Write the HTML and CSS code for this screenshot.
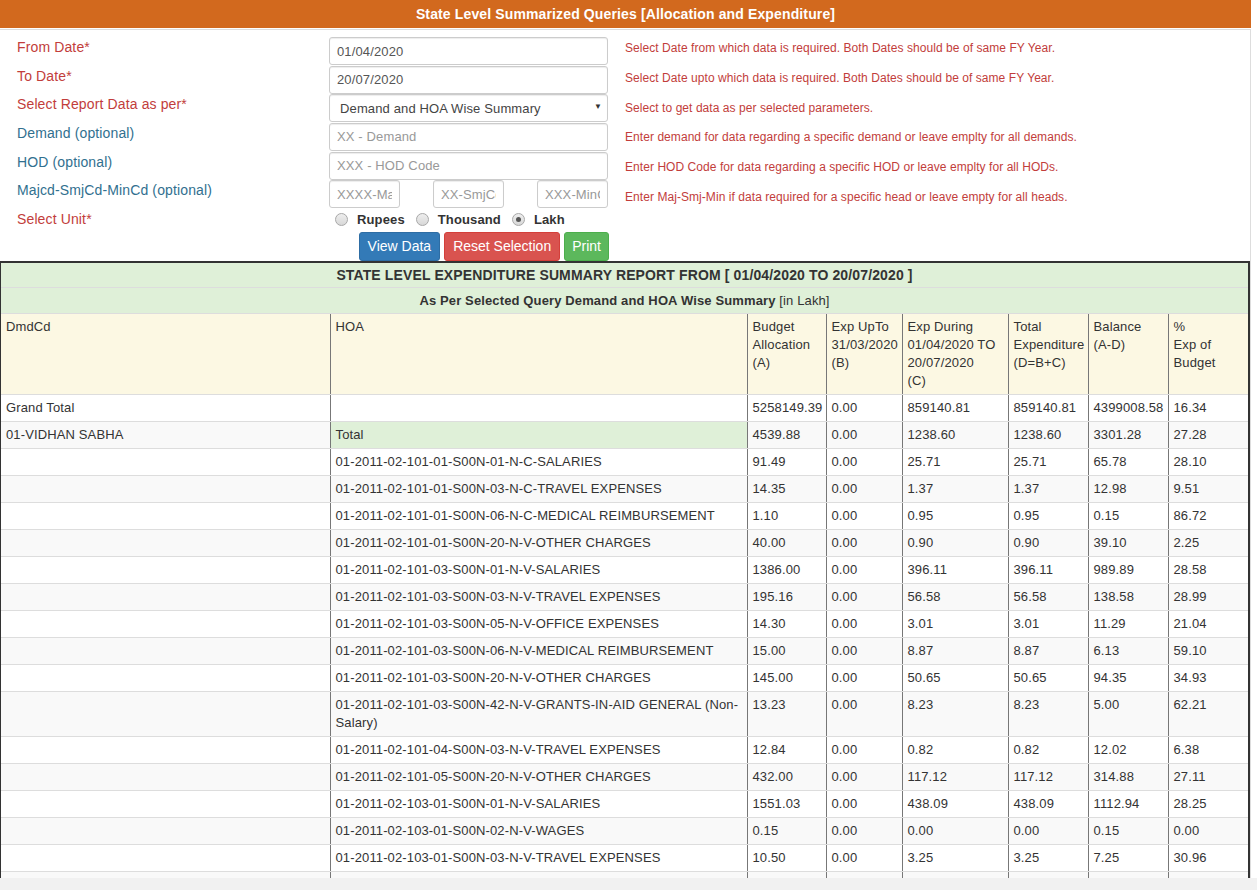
FILE: index.html
```html
<!DOCTYPE html>
<html lang="en">
<head>
<meta charset="utf-8">
<title>State Level Summarized Queries</title>
<link rel="stylesheet" href="styles.css">
</head>
<body>
<div class="app">
  <header class="topbar">State Level Summarized Queries [Allocation and Expenditure]</header>
  <div class="viewport">
    <section class="panel">
      <form class="query">
        <div class="labels">
          <label class="lbl req">From Date*</label>
          <label class="lbl req">To Date*</label>
          <label class="lbl req">Select Report Data as per*</label>
          <label class="lbl opt">Demand (optional)</label>
          <label class="lbl opt">HOD (optional)</label>
          <label class="lbl opt">Majcd-SmjCd-MinCd (optional)</label>
          <label class="lbl req">Select Unit*</label>
        </div>
        <div class="fields">
          <div class="field"><input class="ctl" type="text" value="01/04/2020"></div>
          <div class="field"><input class="ctl" type="text" value="20/07/2020"></div>
          <div class="field">
            <div class="select-wrap">
              <select class="ctl sel"><option>Demand and HOA Wise Summary</option></select>
            </div>
          </div>
          <div class="field"><input class="ctl" type="text" placeholder="XX - Demand"></div>
          <div class="field"><input class="ctl" type="text" placeholder="XXX - HOD Code"></div>
          <div class="field triple">
            <input class="ctl small" type="text" placeholder="XXXX-MajCd">
            <input class="ctl small" type="text" placeholder="XX-SmjCd">
            <input class="ctl small" type="text" placeholder="XXX-MinCd">
          </div>
          <div class="radios">
            <label class="radio"><span class="dot"></span>Rupees</label>
            <label class="radio"><span class="dot"></span>Thousand</label>
            <label class="radio"><span class="dot on"></span>Lakh</label>
          </div>
          <div class="buttons">
            <button type="button" class="btn blue">View Data</button>
            <button type="button" class="btn red">Reset Selection</button>
            <button type="button" class="btn green">Print</button>
          </div>
        </div>
        <div class="helps">
          <p>Select Date from which data is required. Both Dates should be of same FY Year.</p>
          <p>Select Date upto which data is required. Both Dates should be of same FY Year.</p>
          <p>Select to get data as per selected parameters.</p>
          <p>Enter demand for data regarding a specific demand or leave emplty for all demands.</p>
          <p>Enter HOD Code for data regarding a specific HOD or leave emplty for all HODs.</p>
          <p>Enter Maj-Smj-Min if data required for a specific head or leave empty for all heads.</p>
        </div>
      </form>

      <table class="report">
        <colgroup>
          <col class="c1"><col class="c2"><col class="c3"><col class="c4"><col class="c5"><col class="c6"><col class="c7"><col class="c8">
        </colgroup>
        <thead>
          <tr class="title"><th colspan="8">STATE LEVEL EXPENDITURE SUMMARY REPORT FROM [ 01/04/2020 TO 20/07/2020 ]</th></tr>
          <tr class="sub"><th colspan="8">As Per Selected Query Demand and HOA Wise Summary <span class="unit">[in Lakh]</span></th></tr>
          <tr class="cols">
            <td>DmdCd</td>
            <td>HOA</td>
            <td>Budget<br>Allocation<br>(A)</td>
            <td>Exp UpTo<br>31/03/2020<br>(B)</td>
            <td>Exp During<br>01/04/2020 TO<br>20/07/2020<br>(C)</td>
            <td>Total<br>Expenditure<br>(D=B+C)</td>
            <td>Balance<br>(A-D)</td>
            <td>%<br>Exp of<br>Budget</td>
          </tr>
        </thead>
        <tbody>
          <tr><td>Grand Total</td><td></td><td>5258149.39</td><td>0.00</td><td>859140.81</td><td>859140.81</td><td>4399008.58</td><td>16.34</td></tr>
          <tr><td>01-VIDHAN SABHA</td><td class="tot">Total</td><td>4539.88</td><td>0.00</td><td>1238.60</td><td>1238.60</td><td>3301.28</td><td>27.28</td></tr>
          <tr><td></td><td>01-2011-02-101-01-S00N-01-N-C-SALARIES</td><td>91.49</td><td>0.00</td><td>25.71</td><td>25.71</td><td>65.78</td><td>28.10</td></tr>
          <tr><td></td><td>01-2011-02-101-01-S00N-03-N-C-TRAVEL EXPENSES</td><td>14.35</td><td>0.00</td><td>1.37</td><td>1.37</td><td>12.98</td><td>9.51</td></tr>
          <tr><td></td><td>01-2011-02-101-01-S00N-06-N-C-MEDICAL REIMBURSEMENT</td><td>1.10</td><td>0.00</td><td>0.95</td><td>0.95</td><td>0.15</td><td>86.72</td></tr>
          <tr><td></td><td>01-2011-02-101-01-S00N-20-N-V-OTHER CHARGES</td><td>40.00</td><td>0.00</td><td>0.90</td><td>0.90</td><td>39.10</td><td>2.25</td></tr>
          <tr><td></td><td>01-2011-02-101-03-S00N-01-N-V-SALARIES</td><td>1386.00</td><td>0.00</td><td>396.11</td><td>396.11</td><td>989.89</td><td>28.58</td></tr>
          <tr><td></td><td>01-2011-02-101-03-S00N-03-N-V-TRAVEL EXPENSES</td><td>195.16</td><td>0.00</td><td>56.58</td><td>56.58</td><td>138.58</td><td>28.99</td></tr>
          <tr><td></td><td>01-2011-02-101-03-S00N-05-N-V-OFFICE EXPENSES</td><td>14.30</td><td>0.00</td><td>3.01</td><td>3.01</td><td>11.29</td><td>21.04</td></tr>
          <tr><td></td><td>01-2011-02-101-03-S00N-06-N-V-MEDICAL REIMBURSEMENT</td><td>15.00</td><td>0.00</td><td>8.87</td><td>8.87</td><td>6.13</td><td>59.10</td></tr>
          <tr><td></td><td>01-2011-02-101-03-S00N-20-N-V-OTHER CHARGES</td><td>145.00</td><td>0.00</td><td>50.65</td><td>50.65</td><td>94.35</td><td>34.93</td></tr>
          <tr><td></td><td>01-2011-02-101-03-S00N-42-N-V-GRANTS-IN-AID GENERAL (Non-Salary)</td><td>13.23</td><td>0.00</td><td>8.23</td><td>8.23</td><td>5.00</td><td>62.21</td></tr>
          <tr><td></td><td>01-2011-02-101-04-S00N-03-N-V-TRAVEL EXPENSES</td><td>12.84</td><td>0.00</td><td>0.82</td><td>0.82</td><td>12.02</td><td>6.38</td></tr>
          <tr><td></td><td>01-2011-02-101-05-S00N-20-N-V-OTHER CHARGES</td><td>432.00</td><td>0.00</td><td>117.12</td><td>117.12</td><td>314.88</td><td>27.11</td></tr>
          <tr><td></td><td>01-2011-02-103-01-S00N-01-N-V-SALARIES</td><td>1551.03</td><td>0.00</td><td>438.09</td><td>438.09</td><td>1112.94</td><td>28.25</td></tr>
          <tr><td></td><td>01-2011-02-103-01-S00N-02-N-V-WAGES</td><td>0.15</td><td>0.00</td><td>0.00</td><td>0.00</td><td>0.15</td><td>0.00</td></tr>
          <tr><td></td><td>01-2011-02-103-01-S00N-03-N-V-TRAVEL EXPENSES</td><td>10.50</td><td>0.00</td><td>3.25</td><td>3.25</td><td>7.25</td><td>30.96</td></tr>
          <tr class="cut"><td></td><td></td><td></td><td></td><td></td><td></td><td></td><td></td></tr>
        </tbody>
      </table>
    </section>
  </div>
  <div class="hscroll"></div>
</div>
</body>
</html>
```

FILE: styles.css
```css
* { box-sizing: border-box; }

html, body {
  margin: 0;
  padding: 0;
  background: #fff;
}

body {
  font-family: "Liberation Sans", Arial, Helvetica, sans-serif;
  font-size: 13px;
  color: #333;
  letter-spacing: 0.13px;
}

.app {
  height: 890px;
  display: flex;
  flex-direction: column;
  overflow: hidden;
}

.topbar {
  width: 1251px;
  height: 28px;
  flex: none;
  background: #d2691e;
  color: #fff;
  font-weight: bold;
  font-size: 14px;
  line-height: 28px;
  text-align: center;
}

.viewport {
  flex: 1;
  min-height: 0;
  overflow: hidden;
  padding-top: 1px;
}

.hscroll {
  flex: none;
  height: 12px;
  background: #f1f1f1;
}

.panel {
  width: 1251px;
  border-top: 1px solid #ddd;
  border-right: 1px solid #ddd;
}

/* query form */
.query {
  display: flex;
  padding-top: 7px;
}

.labels {
  width: 329px;
  flex: none;
  padding-left: 17px;
  display: flex;
  flex-direction: column;
}

.lbl {
  height: 28.67px;
  line-height: 20px;
  font-size: 14px;
}
.lbl.req { color: #c23d3b; }
.lbl.opt { color: #31708f; }

.fields {
  width: 279px;
  flex: none;
  display: flex;
  flex-direction: column;
}

.field {
  height: 28.67px;
}

.ctl {
  display: block;
  width: 100%;
  height: 28px;
  margin: 0;
  padding: 0 7px;
  border: 1px solid #ccc;
  border-radius: 3px;
  box-shadow: inset 0 1px 1px rgba(0, 0, 0, .075);
  background: #fff;
  font-family: "Liberation Sans", Arial, sans-serif;
  font-size: 13px;
  letter-spacing: 0.13px;
  color: #555;
  outline: none;
}
.ctl::placeholder { color: #999; }

.select-wrap {
  position: relative;
}
.select-wrap::after {
  content: "▼";
  position: absolute;
  right: 6px;
  top: 8px;
  font-size: 8px;
  color: #333;
  pointer-events: none;
}
.sel {
  appearance: none;
  -webkit-appearance: none;
  padding-left: 10px;
  color: #444;
}

.triple {
  display: flex;
  justify-content: space-between;
}
.ctl.small {
  width: 71px;
}

.radios {
  height: 22.7px;
  display: flex;
  align-items: center;
  padding-left: 6px;
  padding-bottom: 2px;
}

.radio {
  display: flex;
  align-items: center;
  font-weight: bold;
  font-size: 13px;
  color: #333;
  margin-right: 11px;
}

.dot {
  width: 13px;
  height: 13px;
  border-radius: 50%;
  border: 1px solid #a8a8a8;
  background: linear-gradient(#eee, #d8d8d8);
  margin-right: 9px;
  display: flex;
  align-items: center;
  justify-content: center;
}
.dot.on::before {
  content: "";
  width: 5px;
  height: 5px;
  border-radius: 50%;
  background: #555;
}

.buttons {
  display: flex;
  justify-content: flex-end;
  gap: 4px;
  height: 29px;
  margin-right: -1px;
}

.btn {
  height: 29px;
  padding: 0 8px;
  border: 1px solid transparent;
  border-radius: 3px;
  font-family: "Liberation Sans", Arial, sans-serif;
  font-size: 14px;
  letter-spacing: 0;
  color: #fff;
  cursor: pointer;
}
.btn.blue { background: #337ab7; border-color: #2e6da4; }
.btn.red { background: #d9534f; border-color: #d43f3a; }
.btn.green { background: #5cb85c; border-color: #4cae4c; padding: 0 7px; }

.helps {
  flex: 1;
  padding-left: 17px;
  padding-top: 1px;
  display: flex;
  flex-direction: column;
}
.helps p {
  margin: 0;
  height: 29.8px;
  line-height: 20px;
  font-size: 12px;
  letter-spacing: 0.06px;
  color: #c23d3b;
}

/* report table */
.report {
  width: 1249px;
  margin-left: -1px;
  table-layout: fixed;
  border-collapse: collapse;
  border: 2px solid #333;
}

.c1 { width: 330px; }
.c2 { width: 417px; }
.c3 { width: 79px; }
.c4 { width: 76px; }
.c5 { width: 106px; }
.c6 { width: 80px; }
.c7 { width: 80px; }
.c8 { width: 81px; }

.report th,
.report td {
  padding: 4px 5px;
  text-align: left;
  vertical-align: top;
  line-height: 18px;
  font-size: 13px;
  color: #333;
}

.report .title th {
  background: #dff0d8;
  text-align: center;
  font-size: 14px;
  line-height: 16px;
  border-bottom: 1px solid #ddd;
}

.report .sub th {
  background: #dff0d8;
  text-align: center;
  font-size: 13px;
  line-height: 17px;
  border-bottom: 1px solid #ddd;
}
.report .sub .unit { font-weight: normal; }

.report .cols td {
  background: #fcf8e3;
  white-space: nowrap;
  border-bottom: 1px solid #ddd;
  border-left: 1px solid #777;
}

.report tbody td {
  border-bottom: 1px solid #ddd;
  border-left: 1px solid #777;
  height: 27px;
}

.report tbody tr:nth-child(even) td {
  background: #f9f9f9;
}

.report tbody tr td.tot {
  background: #dff0d8;
}
```
